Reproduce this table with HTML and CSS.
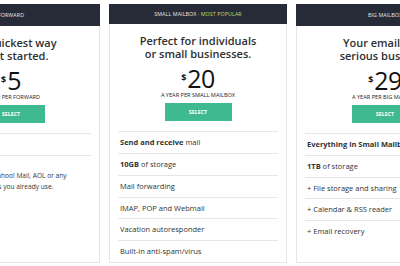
FILE: index.html
```html
<!DOCTYPE html>
<html lang="en">
  <head>
    <meta charset="UTF-8" />
    <meta name="viewport" content="width=device-width, initial-scale=1.0" />
    <title>Pricing</title>
    <link rel="stylesheet" href="styles.css">
  </head>
  <body>
    <div class="plans">
      <div class="plan">
        <div class="plan-head">Forward</div>
        <div class="plan-body">
          <h2 class="plan-title">The quickest way<br />to get started.</h2>
          <div class="price"><span class="currency">$</span>5</div>
          <p class="per">A year per forward</p>
          <a class="select-btn" href="#">Select</a>
          <ul class="features">
            <li>Email forwarding</li>
            <li class="note">
              <b>Works with:</b><br />
              Forward to Gmail, Yahoo! Mail, AOL or any other email accounts you already use.
            </li>
          </ul>
        </div>
      </div>

      <div class="plan">
        <div class="plan-head">Small Mailbox <span class="popular">- Most Popular</span></div>
        <div class="plan-body">
          <h2 class="plan-title">Perfect for individuals<br />or small businesses.</h2>
          <div class="price"><span class="currency">$</span>20</div>
          <p class="per">A year per small mailbox</p>
          <a class="select-btn" href="#">Select</a>
          <ul class="features">
            <li><b>Send and receive</b> mail</li>
            <li><b>10GB</b> of storage</li>
            <li>Mail forwarding</li>
            <li>IMAP, POP and Webmail</li>
            <li>Vacation autoresponder</li>
            <li>Built-in anti-spam/virus</li>
          </ul>
        </div>
      </div>

      <div class="plan">
        <div class="plan-head">Big Mailbox</div>
        <div class="plan-body">
          <h2 class="plan-title">Your email runs<br />serious business.</h2>
          <div class="price"><span class="currency">$</span>29</div>
          <p class="per">A year per big mailbox</p>
          <a class="select-btn" href="#">Select</a>
          <ul class="features">
            <li><b>Everything in Small Mailbox</b></li>
            <li><b>1TB</b> of storage</li>
            <li>+ File storage and sharing</li>
            <li>+ Calendar &amp; RSS reader</li>
            <li>+ Email recovery</li>
          </ul>
        </div>
      </div>
    </div>
  </body>
</html>
```

FILE: styles.css
```css
:root {
  --head-bg: #262b37;
  --accent: #c6dc5c;
  --green: #3fba90;
  --line: #e6e6e6;
  --text: #333333;
}

* {
  padding: 0;
  margin: 0;
  box-sizing: border-box;
}

body {
  font-family: "Open Sans", "Noto Sans", sans-serif;
  background: #ffffff;
  color: var(--text);
  overflow: hidden;
}

/* three columns, the row is wider than the window */
.plans {
  display: flex;
  gap: 9px;
  margin-left: -78px;
  padding-top: 4px;
}

.plan {
  flex: 0 0 178px;
  height: 259px;
  border: 1px solid var(--line);
  border-top: none;
  background: #fff;
  display: flex;
  flex-direction: column;
}

.plan-head {
  height: 22px;
  margin: 0 -1px;
  background: var(--head-bg);
  color: #e8e8e8;
  font-size: 5.3px;
  text-transform: uppercase;
  display: flex;
  justify-content: center;
  align-items: center;
  letter-spacing: 0.1px;
}

.popular {
  color: var(--accent);
  margin-left: 1px;
}

.plan-body {
  padding: 11px 8px 0;
  display: flex;
  flex-direction: column;
  align-items: center;
}

.plan-title {
  font-size: 11px;
  line-height: 12.5px;
  font-weight: 600;
  text-align: center;
  color: #2f2f2f;
}

.price {
  margin-top: 6px;
  font-size: 25px;
  line-height: 25px;
  color: #111;
  letter-spacing: -0.5px;
}

.currency {
  font-size: 9px;
  font-weight: 700;
  vertical-align: top;
  position: relative;
  top: -1px;
  margin-right: 1.5px;
}

.per {
  margin-top: 1px;
  font-size: 5.6px;
  line-height: 6px;
  text-transform: uppercase;
  color: #222;
}

.select-btn {
  margin-top: 5px;
  width: 67px;
  height: 18px;
  background: var(--green);
  color: #fff;
  font-size: 5.3px;
  font-weight: 700;
  text-transform: uppercase;
  text-decoration: none;
  display: flex;
  justify-content: center;
  align-items: center;
}

.features {
  list-style: none;
  align-self: stretch;
  margin-top: 10px;
  font-size: 7.5px;
  line-height: 10.5px;
}

.features li {
  border-top: 1px solid var(--line);
  padding: 5px 2px 5.3px;
}

.features li.note {
  padding: 5px 12px 5.3px 6px;
  font-size: 6.6px;
  line-height: 10.5px;
}
```
